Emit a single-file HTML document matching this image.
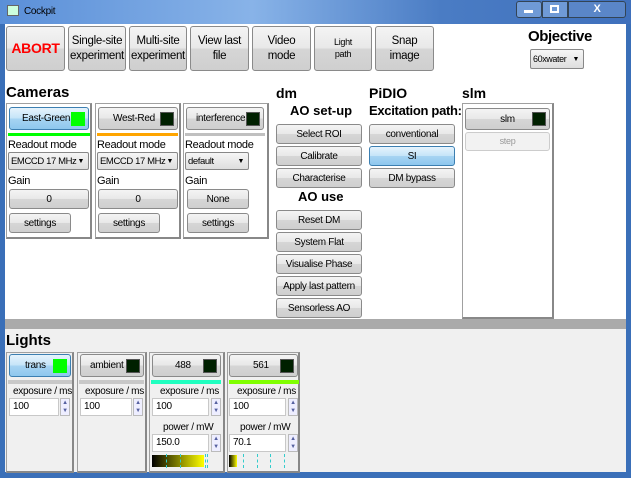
<!DOCTYPE html>
<html><head><style>
*{box-sizing:border-box;margin:0;padding:0;white-space:nowrap}
body{width:631px;height:478px;overflow:hidden;font-family:"Liberation Sans Narrow","Liberation Sans",sans-serif;font-size:11px;letter-spacing:-0.3px;color:#000;background:#3a6fb8;position:relative}
.a{position:absolute}
.btn{position:absolute;border:1px solid #8a8a8a;border-radius:3px;background:linear-gradient(#f4f4f4,#e8e8e8 50%,#d6d6d6 50%,#cfcfcf);display:flex;align-items:center;justify-content:center;text-align:center;line-height:1.3;font-size:10px}
.sel{background:linear-gradient(#e6f3fc,#c4e4f8 50%,#a7d4f2 50%,#8ec7ee);border-color:#3c7fb1}
.led{position:absolute;right:3px;top:4px;width:14px;height:14px;background:#002000;border:1px solid #555}
.panel{position:absolute;border:1px solid #a0a0a0;border-right:2px solid #888;border-bottom:2px solid #888}
.combo{position:absolute;border:1px solid #888;border-radius:2px;background:linear-gradient(#f6f6f6,#dedede);padding-left:2px;display:flex;align-items:center;font-size:9.5px;letter-spacing:-0.4px}
.combo:after{content:"▼";position:absolute;right:4px;font-size:7px}
.h{position:absolute;font-weight:bold;font-size:15px;font-family:"Liberation Sans",sans-serif;letter-spacing:0}
.spin{position:absolute;background:#fff;border:1px solid #c8c8c8;height:18px;padding:2px 3px;font-size:10px}
.arr{position:absolute;width:10px;height:18px;border:1px solid #bbb;background:#eef;font-size:6px;color:#5560a0;line-height:8px;text-align:center}
.t{position:absolute;font-size:10px}
.tb{font-size:11.5px}
</style></head><body>
<div class="a" style="left:0;top:0;width:631px;height:24px;background:linear-gradient(90deg,#5a8fd8,#88b3e8 40%,#4a7cc4 70%,#3f70bc)"></div>
<div class="a" style="left:7px;top:5px;width:12px;height:11px;background:#cfd;border:1px solid #666"></div>
<div class="a" style="left:24px;top:6px;font-size:10px">Cockpit</div>
<div class="a" style="left:516px;top:1px;width:26px;height:17px;border:1px solid #345;border-radius:3px;background:#6f9ad6"></div>
<div class="a" style="left:542px;top:1px;width:26px;height:17px;border:1px solid #345;background:#6f9ad6"></div>
<div class="a" style="left:568px;top:1px;width:58px;height:17px;border:1px solid #345;border-radius:0 3px 3px 0;background:#5a86c8;color:#fff;text-align:center;font-weight:bold;font-size:11px;line-height:15px">X</div>
<div class="a" style="left:524px;top:10px;width:9px;height:3px;background:#fff"></div>
<div class="a" style="left:550px;top:5px;width:9px;height:8px;border:2px solid #fff"></div>
<div class="a" style="left:5px;top:24px;width:621px;height:295px;background:#fff"></div>
<div class="a" style="left:5px;top:319px;width:621px;height:10px;background:#aaa"></div>
<div class="a" style="left:5px;top:329px;width:621px;height:143px;background:#f0f0f0"></div>

<div class="btn" style="left:6px;top:26px;width:59px;height:45px;color:#f00;font-weight:bold;font-size:14px">ABORT</div>
<div class="btn tb" style="left:68px;top:26px;width:58px;height:45px">Single-site<br>experiment</div>
<div class="btn tb" style="left:129px;top:26px;width:58px;height:45px">Multi-site<br>experiment</div>
<div class="btn tb" style="left:190px;top:26px;width:59px;height:45px">View last<br>file</div>
<div class="btn tb" style="left:252px;top:26px;width:59px;height:45px">Video<br>mode</div>
<div class="btn" style="left:314px;top:26px;width:58px;height:45px;font-size:9px">Light<br>path</div>
<div class="btn tb" style="left:375px;top:26px;width:59px;height:45px">Snap<br>image</div>
<div class="h" style="left:528px;top:28px;font-size:15px;letter-spacing:-0.4px">Objective</div>
<div class="combo" style="left:530px;top:49px;width:54px;height:20px;font-size:9px">60xwater</div>

<div class="h" style="left:6px;top:84px">Cameras</div>
<div class="panel" style="left:6px;top:103px;width:86px;height:136px"></div>
<div class="panel" style="left:95px;top:103px;width:86px;height:136px"></div>
<div class="panel" style="left:183px;top:103px;width:86px;height:136px"></div>
<div class="btn sel" style="left:9px;top:107px;width:80px;height:23px;justify-content:flex-start;padding-left:12px">East-Green<div class="led" style="background:#0f0;border:0"></div></div>
<div class="btn" style="left:98px;top:107px;width:80px;height:23px;justify-content:flex-start;padding-left:14px">West-Red<div class="led"></div></div>
<div class="btn" style="left:186px;top:107px;width:78px;height:23px;justify-content:flex-start;padding-left:9px">interference<div class="led"></div></div>
<div class="a" style="left:8px;top:133px;width:82px;height:3px;background:#0f0"></div>
<div class="a" style="left:97px;top:133px;width:81px;height:3px;background:#ffa500"></div>
<div class="a" style="left:185px;top:133px;width:80px;height:3px;background:#c0c0c0"></div>
<div class="t" style="left:8px;top:139px;font-size:11px">Readout mode</div>
<div class="t" style="left:97px;top:139px;font-size:11px">Readout mode</div>
<div class="t" style="left:185px;top:139px;font-size:11px">Readout mode</div>
<div class="combo" style="left:8px;top:152px;width:81px;height:18px">EMCCD 17 MHz</div>
<div class="combo" style="left:97px;top:152px;width:81px;height:18px">EMCCD 17 MHz</div>
<div class="combo" style="left:185px;top:152px;width:64px;height:18px">default</div>
<div class="t" style="left:8px;top:175px;font-size:11px">Gain</div>
<div class="t" style="left:97px;top:175px;font-size:11px">Gain</div>
<div class="t" style="left:185px;top:175px;font-size:11px">Gain</div>
<div class="btn" style="left:9px;top:189px;width:80px;height:20px">0</div>
<div class="btn" style="left:98px;top:189px;width:80px;height:20px">0</div>
<div class="btn" style="left:187px;top:189px;width:62px;height:20px">None</div>
<div class="btn" style="left:9px;top:213px;width:62px;height:20px">settings</div>
<div class="btn" style="left:98px;top:213px;width:62px;height:20px">settings</div>
<div class="btn" style="left:187px;top:213px;width:62px;height:20px">settings</div>

<div class="h" style="left:276px;top:85px;font-size:14px">dm</div>
<div class="h" style="left:290px;top:103px;font-size:13px">AO set-up</div>
<div class="btn" style="left:276px;top:124px;width:86px;height:20px">Select ROI</div>
<div class="btn" style="left:276px;top:146px;width:86px;height:20px">Calibrate</div>
<div class="btn" style="left:276px;top:168px;width:86px;height:20px">Characterise</div>
<div class="h" style="left:298px;top:189px;font-size:13px">AO use</div>
<div class="btn" style="left:276px;top:210px;width:86px;height:20px">Reset DM</div>
<div class="btn" style="left:276px;top:232px;width:86px;height:20px">System Flat</div>
<div class="btn" style="left:276px;top:254px;width:86px;height:20px">Visualise Phase</div>
<div class="btn" style="left:276px;top:276px;width:86px;height:20px">Apply last pattern</div>
<div class="btn" style="left:276px;top:298px;width:86px;height:20px">Sensorless AO</div>

<div class="h" style="left:369px;top:85px;font-size:14px">PiDIO</div>
<div class="h" style="left:369px;top:103px;font-size:13px;letter-spacing:-0.3px">Excitation path:</div>
<div class="btn" style="left:369px;top:124px;width:86px;height:20px">conventional</div>
<div class="btn sel" style="left:369px;top:146px;width:86px;height:20px">SI</div>
<div class="btn" style="left:369px;top:168px;width:86px;height:20px">DM bypass</div>

<div class="h" style="left:462px;top:85px;font-size:14px">slm</div>
<div class="panel" style="left:462px;top:103px;width:92px;height:216px"></div>
<div class="btn" style="left:465px;top:108px;width:85px;height:22px">slm<div class="led" style="top:3px"></div></div>
<div class="btn" style="left:465px;top:132px;width:85px;height:19px;font-size:9px;color:#999;background:#f2f2f2;border-color:#ccc">step</div>

<div class="h" style="left:6px;top:332px">Lights</div>
<div class="panel" style="left:6px;top:352px;width:68px;height:121px"></div>
<div class="panel" style="left:77px;top:352px;width:70px;height:121px"></div>
<div class="panel" style="left:149px;top:352px;width:76px;height:121px"></div>
<div class="panel" style="left:227px;top:352px;width:73px;height:121px"></div>
<div class="btn sel" style="left:9px;top:354px;width:62px;height:23px;justify-content:flex-start;padding-left:15px">trans<div class="led" style="background:#0f0;border:0;top:4px"></div></div>
<div class="btn" style="left:80px;top:354px;width:64px;height:23px;justify-content:flex-start;padding-left:9px">ambient<div class="led"></div></div>
<div class="btn" style="left:152px;top:354px;width:69px;height:23px;justify-content:flex-start;padding-left:22px">488<div class="led"></div></div>
<div class="btn" style="left:229px;top:354px;width:69px;height:23px;justify-content:flex-start;padding-left:23px">561<div class="led"></div></div>
<div class="a" style="left:8px;top:380px;width:64px;height:4px;background:#c8c8c8"></div>
<div class="a" style="left:79px;top:380px;width:65px;height:4px;background:#c8c8c8"></div>
<div class="a" style="left:151px;top:380px;width:70px;height:4px;background:#20ffc0"></div>
<div class="a" style="left:229px;top:380px;width:70px;height:4px;background:#80ff00"></div>
<div class="t" style="left:13px;top:386px">exposure / ms</div>
<div class="t" style="left:85px;top:386px">exposure / ms</div>
<div class="t" style="left:160px;top:386px">exposure / ms</div>
<div class="t" style="left:237px;top:386px">exposure / ms</div>
<div class="spin" style="left:9px;top:398px;width:50px">100</div><div class="arr" style="left:60px;top:398px">▲<br>▼</div>
<div class="spin" style="left:80px;top:398px;width:52px">100</div><div class="arr" style="left:133px;top:398px">▲<br>▼</div>
<div class="spin" style="left:152px;top:398px;width:57px">100</div><div class="arr" style="left:211px;top:398px">▲<br>▼</div>
<div class="spin" style="left:229px;top:398px;width:57px">100</div><div class="arr" style="left:288px;top:398px">▲<br>▼</div>
<div class="t" style="left:163px;top:422px">power / mW</div>
<div class="t" style="left:240px;top:422px">power / mW</div>
<div class="spin" style="left:152px;top:434px;width:57px">150.0</div><div class="arr" style="left:211px;top:434px">▲<br>▼</div>
<div class="spin" style="left:229px;top:434px;width:57px">70.1</div><div class="arr" style="left:288px;top:434px">▲<br>▼</div>
<div class="a" style="left:152px;top:455px;width:52px;height:12px;background:linear-gradient(90deg,#000,#ff0)"></div>
<div class="a" style="left:229px;top:455px;width:8px;height:12px;background:linear-gradient(90deg,#000,#ff0)"></div>
<div class="a" style="left:166px;top:454px;width:40px;height:14px;border-left:1px dashed #3cc;border-right:1px dashed #3cc"></div>
<div class="a" style="left:180px;top:454px;width:28px;height:14px;border-left:1px dashed #3cc;border-right:1px dashed #3cc"></div>
<div class="a" style="left:243px;top:454px;width:42px;height:14px;border-left:1px dashed #3cc;border-right:1px dashed #3cc"></div>
<div class="a" style="left:257px;top:454px;width:14px;height:14px;border-left:1px dashed #3cc;border-right:1px dashed #3cc"></div>
</body></html>
